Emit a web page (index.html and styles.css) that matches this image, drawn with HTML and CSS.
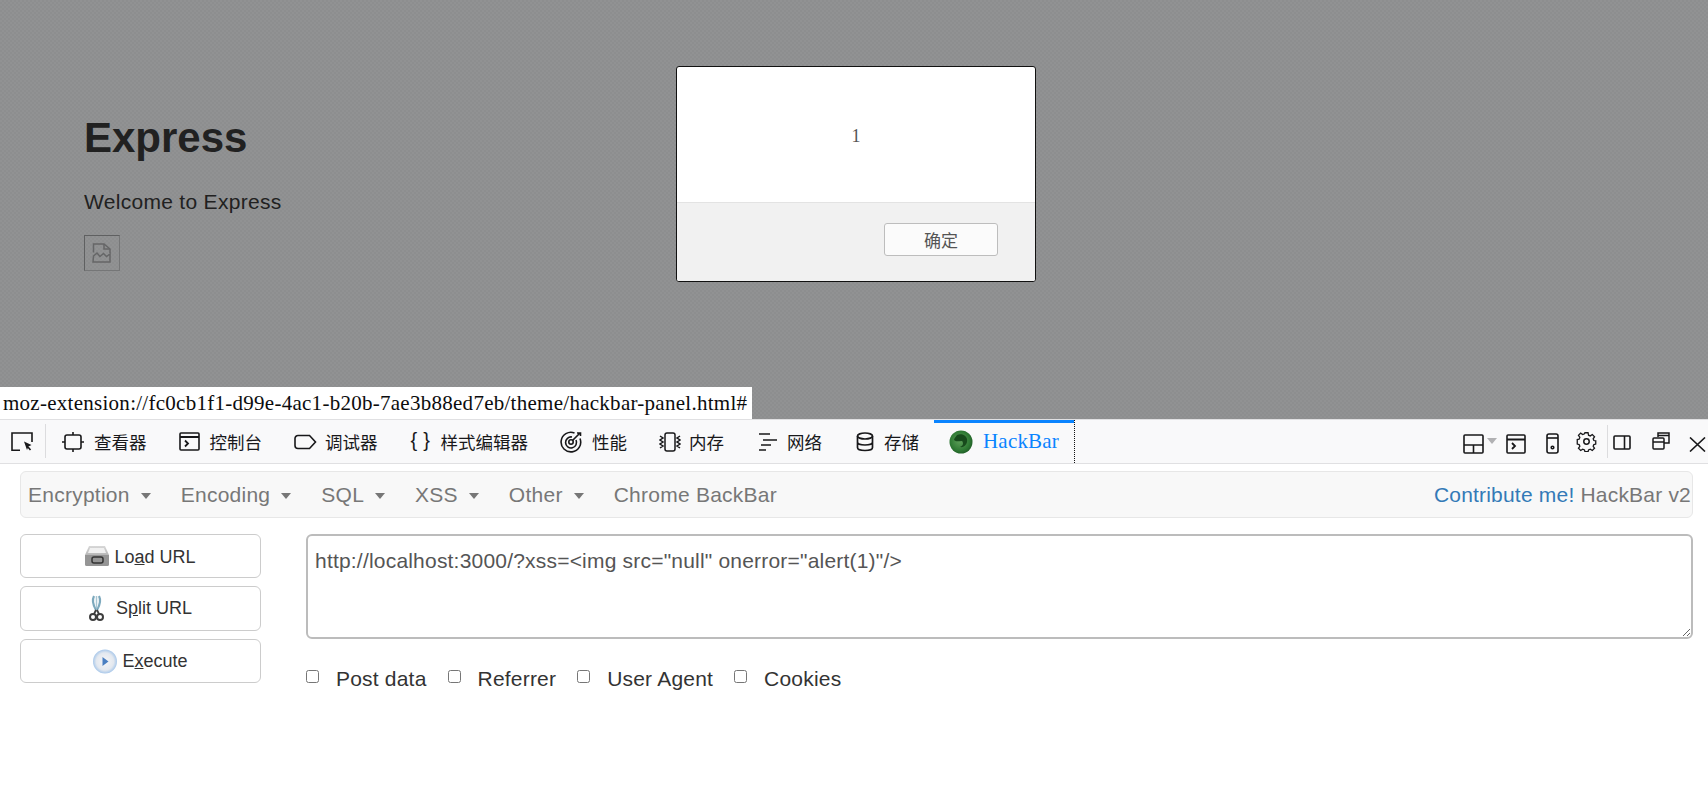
FILE: index.html
```html
<!DOCTYPE html>
<html lang="zh">
<head>
<meta charset="utf-8">
<title>Express</title>
<link rel="stylesheet" href="styles.css">
</head>
<body>
<section class="page">
  <div class="content">
    <h1 class="title">Express</h1>
    <p class="welcome">Welcome to Express</p>
    <span class="broken">
      <svg width="20" height="20" viewBox="0 0 20 20" fill="none" stroke="#656667" stroke-width="1.500"><path d="M1.500 9.500V1h10.500l6 5v4"/><path d="M12 1v5h6"/><path d="M1.500 13l3.500-3 3 3.500 3.500-3 3 3 3.500-2.500v8h-17z"/></svg>
    </span>
  </div>
  <div class="dialog">
    <div class="dialog-body">1</div>
    <div class="dialog-foot"><button class="dialog-ok">确定</button></div>
  </div>
  <div class="status">moz-extension://fc0cb1f1-d99e-4ac1-b20b-7ae3b88ed7eb/theme/hackbar-panel.html#</div>
</section>

<nav class="toolbar">
  <span class="tool pick">
    <svg width="22" height="20" viewBox="0 0 22 20" fill="none" stroke="#18181a" stroke-width="1.600"><path d="M9 18.200H1V1h20v9"/><path d="M13 9.500l7.500 3.500-3 1.500-1.500 3.500z" fill="#18181a" stroke="none"/><path d="M17 15l2.500 3" /></svg>
  </span>
  <div class="tabs">
    <span class="tab">
      <svg class="ic" width="22" height="20" viewBox="0 0 22 20" fill="none" stroke="#18181a" stroke-width="1.600"><rect x="3" y="3" width="16" height="14" rx="2"/><path d="M0 10h3M19 10h3M11 0v3M11 17v3"/></svg>
      查看器
    </span>
    <span class="tab">
      <svg class="ic" width="21" height="20" viewBox="0 0 21 20" fill="none" stroke="#18181a" stroke-width="1.600"><rect x="1" y="1" width="19" height="17" rx="1"/><path d="M1 5h19" stroke-width="2"/><path d="M6 8.500l3 3-3 3" stroke-width="1.800"/></svg>
      控制台
    </span>
    <span class="tab tab-debug">
      <svg class="ic" width="23" height="16" viewBox="0 0 23 16" fill="none" stroke="#18181a" stroke-width="1.600"><path d="M4 1.500h11.500l6 6.500-6 6.500H4a3 3 0 0 1-3-3v-7a3 3 0 0 1 3-3z"/></svg>
      调试器
    </span>
    <span class="tab">
      <span class="braces">{}</span>
      样式编辑器
    </span>
    <span class="tab">
      <svg class="ic" width="22" height="22" viewBox="0 0 22 22" fill="none" stroke="#18181a" stroke-width="1.600"><path d="M20 7.500A9.800 9.800 0 1 1 14.500 2"/><path d="M16 9a5.500 5.500 0 1 1-4-3" /><circle cx="11" cy="11" r="2.200"/><path d="M12.500 9.500L20 2M17 2h3.500v3"/></svg>
      性能
    </span>
    <span class="tab tab-mem">
      <svg class="ic" width="22" height="20" viewBox="0 0 22 20" fill="none" stroke="#18181a" stroke-width="1.500"><rect x="6" y="1" width="10" height="18" rx="2"/><path d="M1 4l3 2-3 2 3 2-3 2 3 2-3 2M21 4l-3 2 3 2-3 2 3 2-3 2 3 2"/></svg>
      内存
    </span>
    <span class="tab tab-net">
      <svg class="ic" width="19" height="20" viewBox="0 0 19 20" fill="none" stroke="#18181a" stroke-width="1.500"><path d="M1 2h11M5 8h14M3 13h10M1 18h7"/></svg>
      网络
    </span>
    <span class="tab tab-store">
      <svg class="ic" width="18" height="20" viewBox="0 0 18 20" fill="none" stroke="#18181a" stroke-width="1.700"><ellipse cx="9" cy="4" rx="7.500" ry="3"/><path d="M1.500 4c0 2 0 4 0 6s3 3 7.500 3 7.500-1 7.500-3V4M1.500 10v5.500c0 2 3 3 7.500 3s7.500-1 7.500-3V10"/></svg>
      存储
    </span>
    <span class="tab active">
      <svg class="ic" width="24" height="24" viewBox="0 0 24 24"><defs><radialGradient id="globe" cx="45%" cy="45%" r="60%"><stop offset="0" stop-color="#5fa05a"/><stop offset="0.7" stop-color="#2f7a34"/><stop offset="1" stop-color="#1d5a24"/></radialGradient></defs><circle cx="12" cy="12" r="11.500" fill="url(#globe)"/><path d="M8 5c4-2 9 0 10 4 1 5-3 9-7 8 3-1 4-4 2-6-3 0-6 1-8-1 0-2 2-3 3-5z" fill="#174a1c"/></svg>
      HackBar
    </span>
  </div>
  <div class="tool-right">
    <svg class="layout" width="21" height="20" viewBox="0 0 21 20" fill="none" stroke="#18181a" stroke-width="1.600"><rect x="1" y="1" width="19" height="18" rx="1"/><path d="M1 11h19M10.500 11v8"/></svg>
    <svg class="drop" width="10" height="6" viewBox="0 0 10 6"><path d="M0 0h10L5 6z" fill="#b1b1b3"/></svg>
    <svg class="cons" width="20" height="20" viewBox="0 0 20 20" fill="none" stroke="#18181a" stroke-width="1.600"><rect x="1" y="1" width="18" height="18" rx="1"/><path d="M1 5.500h18" stroke-width="2"/><path d="M6 9l3 3-3 3" stroke-width="1.800"/></svg>
    <svg class="resp" width="13" height="21" viewBox="0 0 13 21" fill="none" stroke="#18181a" stroke-width="1.600"><rect x="1" y="1" width="11" height="19" rx="2"/><path d="M1 5h11"/><circle cx="6.500" cy="14.500" r="1.300"/></svg>
    <svg class="gear" width="21" height="21" viewBox="0 0 20 20" fill="none" stroke="#18181a" stroke-width="1.400"><path d="M8.300 1h3.400l.5 2.600 1.900.8 2.200-1.500 2.400 2.400-1.500 2.200.8 1.900 2 .4v3.400l-2 .5-.8 1.900 1.500 2.200-2.400 2.400-2.200-1.500-1.900.8-.5 2H8.300l-.5-2-1.900-.8-2.200 1.500-2.400-2.400 1.500-2.200-.8-1.900-2-.5V8.300l2-.4.800-1.900-1.500-2.200 2.400-2.400 2.200 1.500 1.900-.8z" transform="translate(1.200 .8) scale(.88)"/><circle cx="10" cy="10" r="2.600"/></svg>
    <span class="sep"></span>
    <svg class="side" width="18" height="15" viewBox="0 0 18 15" fill="none" stroke="#18181a" stroke-width="1.600"><rect x="1" y="1" width="16" height="13" rx="1"/><path d="M11.500 1v13" /></svg>
    <svg class="win" width="18" height="18" viewBox="0 0 18 18" fill="none" stroke="#18181a" stroke-width="1.500"><path d="M6 5V1h11v10h-5"/><path d="M6 3.500h11" /><rect x="1" y="6" width="11" height="11" rx="1"/><path d="M1 10h11"/></svg>
    <svg class="close" width="17" height="15" viewBox="0 0 17 15" fill="none" stroke="#18181a" stroke-width="1.600"><path d="M1 0.500l15 14M16 0.500L1 14.500"/></svg>
  </div>
</nav>

<main class="panel">
  <div class="hb-nav">
    <div class="hb-menu">
      <span class="hb-item">Encryption<i class="caret"></i></span>
      <span class="hb-item">Encoding<i class="caret"></i></span>
      <span class="hb-item">SQL<i class="caret"></i></span>
      <span class="hb-item">XSS<i class="caret"></i></span>
      <span class="hb-item">Other<i class="caret"></i></span>
      <span class="hb-item">Chrome BackBar</span>
    </div>
    <div class="hb-brand"><a class="hb-link">Contribute me!</a> HackBar v2</div>
  </div>
  <div class="hb-body">
    <div class="hb-buttons">
      <button class="hb-btn btn-load">
        <svg width="24" height="22" viewBox="0 0 24 22"><defs><linearGradient id="drv" x1="0" y1="0" x2="0" y2="1"><stop offset="0" stop-color="#d8d8d8"/><stop offset="1" stop-color="#8f8f8f"/></linearGradient></defs><path d="M4 1h16l4 9v9a2 2 0 0 1-2 2H2a2 2 0 0 1-2-2v-9z" fill="url(#drv)"/><path d="M5 3h14l2 5H3z" fill="#f0f0f0"/><path d="M0 10h24v9a2 2 0 0 1-2 2H2a2 2 0 0 1-2-2z" fill="#959595"/><rect x="7" y="12" width="11" height="6" rx="2" fill="none" stroke="#333" stroke-width="1.500"/></svg>
        <span>Lo<u>a</u>d URL</span>
      </button>
      <button class="hb-btn btn-split">
        <svg width="15" height="27" viewBox="0 0 15 27" fill="none"><path d="M5 1c-2 4-1 9 2 14M10 1c2 4 1 9-2 14" stroke="#7da9bd" stroke-width="2.200"/><path d="M7.500 1v12" stroke="#a9c6d3" stroke-width="1.500"/><circle cx="4" cy="22" r="3" stroke="#3e3e3e" stroke-width="2"/><circle cx="11" cy="22" r="3" stroke="#3e3e3e" stroke-width="2"/><path d="M7 15l-2 4M8 15l2 4" stroke="#3e3e3e" stroke-width="1.800"/></svg>
        <span>S<u>p</u>lit URL</span>
      </button>
      <button class="hb-btn btn-exec">
        <svg width="24" height="25" viewBox="0 0 24 25"><defs><radialGradient id="exe" cx="50%" cy="50%" r="50%"><stop offset="0" stop-color="#f5f6f8"/><stop offset="0.72" stop-color="#e3e8ef"/><stop offset="1" stop-color="#a9c8ea"/></radialGradient></defs><circle cx="12" cy="12.500" r="12" fill="url(#exe)"/><path d="M9.500 8v9l6-4.500z" fill="#4a7fc1"/></svg>
        <span>E<u>x</u>ecute</span>
      </button>
    </div>
    <div class="hb-main">
      <textarea class="hb-url" spellcheck="false">http://localhost:3000/?xss=&lt;img src="null" onerror="alert(1)"/&gt;</textarea>
      <div class="hb-checks">
        <label class="hb-check"><input type="checkbox">Post data</label>
        <label class="hb-check"><input type="checkbox">Referrer</label>
        <label class="hb-check"><input type="checkbox">User Agent</label>
        <label class="hb-check"><input type="checkbox">Cookies</label>
      </div>
    </div>
  </div>
</main>
</body>
</html>
```

FILE: styles.css
```css
* { box-sizing: border-box; }
html, body { margin: 0; height: 100%; }
body {
  background: #fff;
  overflow: hidden;
  font-family: "Liberation Sans", Arial, sans-serif;
  display: flex;
  flex-direction: column;
}

/* page under the modal overlay */
.page {
  position: relative;
  height: 419px;
  flex: none;
  background-color: #8f9091;
  background-image: repeating-conic-gradient(#8d8e8f 0 25%, #919293 0 50%);
  background-size: 4px 4px;
  color: #212121;
}
.content { padding: 112px 0 0 84px; }
.title {
  margin: 0;
  font-size: 42px;
  line-height: 52px;
  font-weight: 700;
}
.welcome {
  margin: 24px 0 0;
  font-size: 21px;
  line-height: 28px;
  letter-spacing: .3px;
}
.broken {
  display: flex;
  width: 36px;
  height: 36px;
  margin-top: 19px;
  align-items: center;
  justify-content: center;
  border: 1px solid #5f6061;
  border-right-color: #757677;
  border-bottom-color: #757677;
}

.dialog {
  position: absolute;
  left: 676px;
  top: 66px;
  width: 360px;
  height: 216px;
  display: flex;
  flex-direction: column;
  background: #fff;
  border: 1px solid #111;
  border-radius: 3px;
  overflow: hidden;
  font-family: "Liberation Serif", "Noto Sans CJK SC", serif;
  color: #555;
}
.dialog-body {
  height: 135px;
  flex: none;
  display: flex;
  align-items: center;
  justify-content: center;
  padding-top: 4px;
  font-size: 18px;
}
.dialog-foot {
  flex: 1;
  display: flex;
  justify-content: flex-end;
  align-items: flex-start;
  padding: 20px 37px 0 0;
  background: #f1f1f1;
  border-top: 1px solid #e3e3e3;
}
.dialog-ok {
  width: 114px;
  height: 33px;
  padding: 0;
  background: #fbfbfb;
  border: 1px solid #bdbdbd;
  border-radius: 3px;
  color: #555;
  font-family: "Noto Sans CJK SC", sans-serif;
  font-size: 17px;
  font-weight: 400;
}
.status {
  position: absolute;
  left: 0;
  bottom: 0;
  height: 32px;
  width: 752px;
  padding: 0 0 0 3px;
  background: #fff;
  color: #0c0c0d;
  font-family: "Liberation Serif", serif;
  font-size: 21px;
  letter-spacing: .27px;
  line-height: 33px;
  white-space: nowrap;
}

/* devtools toolbar */
.toolbar {
  flex: none;
  height: 45px;
  display: flex;
  align-items: stretch;
  background: #f9f9fa;
  border-top: 1px solid #e0e0e2;
  border-bottom: 1px solid #e0e0e2;
  color: #18181a;
  font-family: "Liberation Serif", "Noto Sans CJK SC", serif;
  font-size: 17.500px;
}
.tool { display: flex; align-items: center; }
.pick {
  width: 46px;
  padding-left: 11px;
  position: relative;
}
.pick::after {
  content: "";
  position: absolute;
  right: 0;
  top: 4px;
  bottom: 5px;
  width: 1px;
  background: #dcdcde;
}
.tabs { display: flex; }
.tab {
  display: flex;
  align-items: center;
  gap: 10px;
  padding: 0 16px;
  white-space: nowrap;
}
.tab-debug { gap: 8px; padding-right: 17px; }
.tab-mem { gap: 8px; }
.tab-net { padding: 0 18px; }
.tab-store { padding-right: 15px; }
.braces {
  flex: none;
  width: 20px;
  font-family: "Liberation Sans", sans-serif;
  font-size: 20px;
  letter-spacing: 6px;
  padding-bottom: 3px;
  white-space: nowrap;
}
.tab.active {
  position: relative;
  padding: 0 15px 0 15px;
  color: #0a84ff;
  font-size: 21px;
  font-family: "Liberation Serif", serif;
  letter-spacing: .2px;
  border-right: 1px dotted #111;
}
.tab.active::before {
  content: "";
  position: absolute;
  left: 0;
  right: 0;
  top: 0;
  height: 3px;
  background: #0a84ff;
}
.tool-right {
  margin-left: auto;
  display: flex;
  align-items: flex-start;
  position: relative;
  padding-top: 13px;
}
.tool-right svg { flex: none; display: block; }
.layout { margin-top: 1px; }
.drop { margin: 5px 0 0 3px; }
.cons { margin: 1px 0 0 9px; }
.resp { margin: 0 0 0 20px; }
.gear { margin: -2px 0 0 17px; }
.sep { width: 1px; height: 33px; margin: -8px 0 0 10px; background: #dcdcde; }
.side { margin: 2px 0 0 5px; }
.win { margin: -1px 0 0 21px; }
.close { margin: 4px 2px 0 19px; }

/* HackBar panel */
.panel {
  flex: 1;
  padding: 7px 15px 0 20px;
  color: #333;
  font-size: 21px;
  letter-spacing: .2px;
}
.hb-nav {
  height: 47px;
  display: flex;
  align-items: center;
  justify-content: space-between;
  padding: 0 1px 0 7px;
  background: #f8f8f8;
  border: 1px solid #e7e7e7;
  border-radius: 6px;
  color: #777;
}
.hb-menu { display: flex; gap: 30px; }
.hb-item { display: inline-flex; align-items: center; white-space: nowrap; letter-spacing: .25px; }
.caret {
  display: inline-block;
  margin: 3px 0 0 11px;
  border-top: 6px solid #777;
  border-left: 5.500px solid transparent;
  border-right: 5.500px solid transparent;
}
.hb-link { color: #337ab7; }
.hb-body {
  display: flex;
  gap: 45px;
  margin-top: 16px;
}
.hb-buttons {
  width: 241px;
  flex: none;
  display: flex;
  flex-direction: column;
  gap: 8px;
}
.hb-btn {
  display: flex;
  align-items: center;
  justify-content: center;
  gap: 5px;
  padding: 0;
  height: 44px;
  background: #fff;
  border: 1px solid #ccc;
  border-radius: 6px;
  color: #333;
  font-family: "Liberation Sans", Arial, sans-serif;
  font-size: 18px;
}
.btn-load span { position: relative; top: 1px; }
.btn-split { height: 45px; gap: 12px; }
.hb-main { flex: 1; min-width: 0; }
.hb-url {
  display: block;
  width: 100%;
  height: 105px;
  padding: 10px 7px;
  border: 2px solid #bcbcbc;
  border-radius: 6px;
  background: #fff;
  color: #555;
  font-family: "Liberation Sans", Arial, sans-serif;
  font-size: 21px;
  letter-spacing: .2px;
  line-height: 30px;
  outline: none;
}
.hb-checks {
  display: flex;
  gap: 21px;
  margin-top: 28px;
}
.hb-check {
  display: flex;
  align-items: flex-start;
  line-height: 24px;
}
.hb-check input {
  width: 13px;
  height: 13px;
  margin: 3px 17px 0 0;
}
```
